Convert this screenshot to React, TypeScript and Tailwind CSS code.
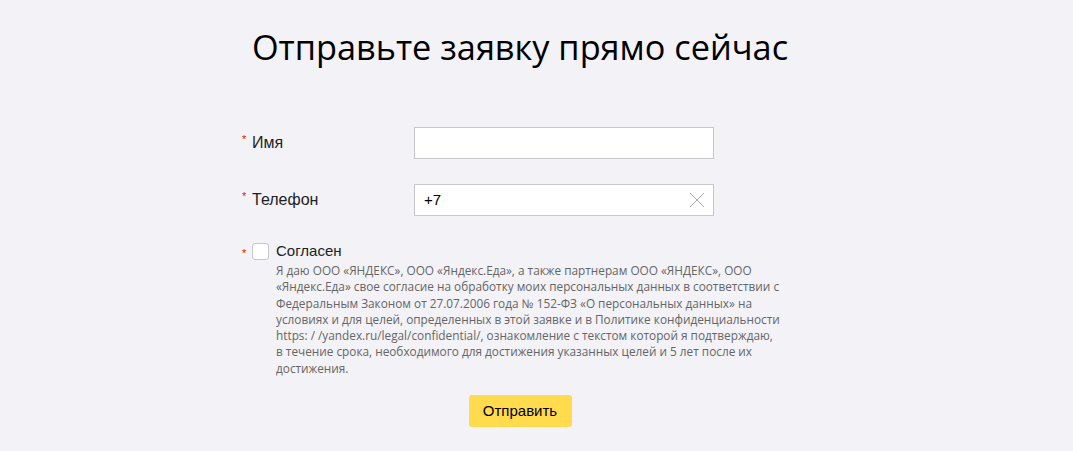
import React from "react";

export default function App() {
  const lines = [
    "Я даю ООО «ЯНДЕКС», ООО «Яндекс.Еда», а также партнерам ООО «ЯНДЕКС», ООО",
    "«Яндекс.Еда» свое согласие на обработку моих персональных данных в соответствии с",
    "Федеральным Законом от 27.07.2006 года № 152-ФЗ «О персональных данных» на",
    "условиях и для целей, определенных в этой заявке и в Политике конфиденциальности",
    "https: / /yandex.ru/legal/confidential/, ознакомление с текстом которой я подтверждаю,",
    "в течение срока, необходимого для достижения указанных целей и 5 лет после их",
    "достижения.",
  ];
  return (
    <div className="w-[1073px] h-[451px] bg-[#f2f2f7] overflow-hidden" style={{ fontFamily: '"Liberation Sans", Arial, sans-serif' }}>
      <div className="w-[589px] mx-auto">
        <div className="w-[556px]">
          <h1 className="text-center whitespace-nowrap text-[34.3px] leading-[44px] text-black pt-[25px] font-normal" style={{ fontFamily: '"Open Sans", sans-serif' }}>
            Отправьте заявку прямо сейчас
          </h1>
          <div className="mt-[58px] flex items-center">
            <div className="w-[172px] flex items-center">
              <span className="text-[#e61400] text-[11px] leading-none w-[10px] -mt-[8px]">*</span>
              <span className="text-[16px] text-[#222]">Имя</span>
            </div>
            <div className="w-[300px] h-[32px] bg-white border border-[#c8c8cc]" />
          </div>
          <div className="mt-[25px] flex items-center">
            <div className="w-[172px] flex items-center">
              <span className="text-[#e61400] text-[11px] leading-none w-[10px] -mt-[8px]">*</span>
              <span className="text-[16px] text-[#222]">Телефон</span>
            </div>
            <div className="w-[300px] h-[32px] bg-white border border-[#c8c8cc] flex items-center justify-between pl-[9px] pr-[8px]">
              <span className="text-[15px] text-black">+7</span>
              <svg width="16" height="16" viewBox="0 0 16 16">
                <path d="M1 1 L15 15 M15 1 L1 15" stroke="#a8a8a8" strokeWidth="1" fill="none" />
              </svg>
            </div>
          </div>
          <div className="mt-[26px] flex items-start">
            <span className="text-[#e61400] text-[11px] leading-none w-[10px] mt-[6px]">*</span>
            <div className="w-[17px] h-[17px] bg-white border border-[#c8c8cc] rounded-[3px] mt-[1px]" />
            <div className="ml-[7px]">
              <div className="text-[15px] leading-[18px] text-[#222]">Согласен</div>
              <div className="text-[11.8px] leading-[16.3px] text-[#666] mt-[2px] whitespace-nowrap" style={{ fontFamily: '"Open Sans", sans-serif' }}>
                {lines.map((l, i) => (
                  <div key={i}>{l}</div>
                ))}
              </div>
            </div>
          </div>
          <div className="mt-[19px] flex justify-center">
            <button className="w-[103px] h-[32px] bg-[#ffdb4d] rounded-[3px] text-[15px] text-black">Отправить</button>
          </div>
        </div>
      </div>
    </div>
  );
}
